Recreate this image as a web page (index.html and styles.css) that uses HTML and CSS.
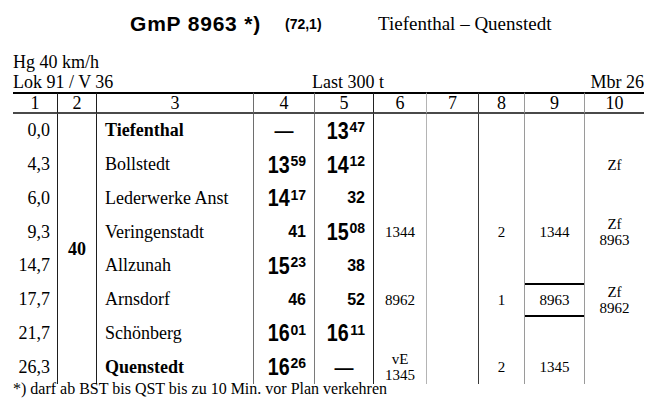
FILE: index.html
```html
<!DOCTYPE html>
<html lang="de">
<head>
<meta charset="utf-8">
<title>GmP 8963</title>
<link rel="stylesheet" href="styles.css">
</head>
<body>
<div class="page">
  <div class="title">
    <span class="train">GmP 8963 *)</span>
    <span class="code">(72,1)</span>
    <span class="route">Tiefenthal – Quenstedt</span>
  </div>
  <div class="meta">Hg 40 km/h</div>
  <div class="meta meta-row"><span>Lok 91 / V 36</span><span>Last 300 t</span><span class="mbr">Mbr 26</span></div>

  <div class="fpl">
    <div class="th c1">1</div><div class="th c2">2</div><div class="th c3">3</div><div class="th c4">4</div><div class="th c5">5</div><div class="th c6">6</div><div class="th c7">7</div><div class="th c8">8</div><div class="th c9">9</div><div class="th c10">10</div>

    <div class="td c1 km">0,0</div>
    <div class="td c2 vmax">40</div>
    <div class="td c3 stn bold">Tiefenthal</div>
    <div class="td c4 tm ctr"><span class="dash">—</span></div>
    <div class="td c5 tm"><span class="h">13</span><span class="m">47</span></div>
    <div class="td c6"></div><div class="td c7"></div><div class="td c8"></div><div class="td c9"></div><div class="td c10"></div>

    <div class="td c1 km">4,3</div>
    <div class="td c3 stn">Bollstedt</div>
    <div class="td c4 tm"><span class="h">13</span><span class="m">59</span></div>
    <div class="td c5 tm"><span class="h">14</span><span class="m">12</span></div>
    <div class="td c6"></div><div class="td c7"></div><div class="td c8"></div><div class="td c9"></div>
    <div class="td c10 sm">Zf</div>

    <div class="td c1 km">6,0</div>
    <div class="td c3 stn">Lederwerke Anst</div>
    <div class="td c4 tm"><span class="h">14</span><span class="m">17</span></div>
    <div class="td c5 tm"><span class="mo">32</span></div>
    <div class="td c6"></div><div class="td c7"></div><div class="td c8"></div><div class="td c9"></div><div class="td c10"></div>

    <div class="td c1 km">9,3</div>
    <div class="td c3 stn">Veringenstadt</div>
    <div class="td c4 tm"><span class="mo">41</span></div>
    <div class="td c5 tm"><span class="h">15</span><span class="m">08</span></div>
    <div class="td c6 sm">1344</div><div class="td c7"></div><div class="td c8 sm">2</div><div class="td c9 sm">1344</div>
    <div class="td c10 sm">Zf<br>8963</div>

    <div class="td c1 km">14,7</div>
    <div class="td c3 stn">Allzunah</div>
    <div class="td c4 tm"><span class="h">15</span><span class="m">23</span></div>
    <div class="td c5 tm"><span class="mo">38</span></div>
    <div class="td c6"></div><div class="td c7"></div><div class="td c8"></div><div class="td c9"></div><div class="td c10"></div>

    <div class="td c1 km">17,7</div>
    <div class="td c3 stn">Arnsdorf</div>
    <div class="td c4 tm"><span class="mo">46</span></div>
    <div class="td c5 tm"><span class="mo">52</span></div>
    <div class="td c6 sm">8962</div><div class="td c7"></div><div class="td c8 sm">1</div><div class="td c9 sm boxed">8963</div>
    <div class="td c10 sm">Zf<br>8962</div>

    <div class="td c1 km">21,7</div>
    <div class="td c3 stn">Schönberg</div>
    <div class="td c4 tm"><span class="h">16</span><span class="m">01</span></div>
    <div class="td c5 tm"><span class="h">16</span><span class="m">11</span></div>
    <div class="td c6"></div><div class="td c7"></div><div class="td c8"></div><div class="td c9"></div><div class="td c10"></div>

    <div class="td c1 km">26,3</div>
    <div class="td c3 stn bold">Quenstedt</div>
    <div class="td c4 tm"><span class="h">16</span><span class="m">26</span></div>
    <div class="td c5 tm ctr"><span class="dash">—</span></div>
    <div class="td c6 sm">vE<br>1345</div><div class="td c7"></div><div class="td c8 sm">2</div><div class="td c9 sm">1345</div><div class="td c10"></div>
  </div>

  <div class="foot">*) darf ab BST bis QST bis zu 10 Min. vor Plan verkehren</div>
</div>
</body>
</html>
```

FILE: styles.css
```css
html, body {
  margin: 0;
  padding: 0;
  background: #fff;
  color: #000;
}

body {
  font-family: "Liberation Serif", "Times New Roman", serif;
}

.page {
  width: 656px;
  height: 414px;
  box-sizing: border-box;
  padding: 0 12px 0 13px;
  overflow: hidden;
}

/* Title line */
.title {
  height: 44px;
  display: grid;
  grid-template-columns: 155px 93px auto;
  align-items: center;
  padding-left: 117px;
  padding-top: 3px;
  box-sizing: border-box;
}

.train {
  font-family: "Liberation Sans", Arial, sans-serif;
  font-weight: bold;
  font-size: 21px;
  letter-spacing: 0.8px;
}

.code {
  font-family: "Liberation Sans", Arial, sans-serif;
  font-weight: bold;
  font-size: 14px;
}

.route {
  font-size: 19px;
}

/* Meta lines */
.meta {
  font-size: 18px;
  line-height: 20px;
}

.title + .meta {
  margin-top: 8px;
}

.meta-row {
  display: grid;
  grid-template-columns: 299px 1fr auto;
}

/* Timetable grid */
.fpl {
  display: grid;
  grid-template-columns: 45px 39px 157px 61px 59px 53px 52px 46px 60px 59px;
  grid-template-rows: 22px repeat(8, 33.75px);
}

.th,
.td {
  box-sizing: border-box;
  border-right: 1px solid #222;
  display: flex;
  align-items: center;
  justify-content: center;
  min-width: 0;
}

.th {
  border-top: 2px solid #000;
  border-bottom: 2px solid #4a4a4a;
  font-size: 18px;
  line-height: 18px;
}

.c1, .c2 { border-right-color: #1e1e1e; }
.c3 { border-right-color: #6e6e6e; }
.c4 { border-right-color: #7a7a7a; }
.c5 { border-right-color: #222; }
.c6 { border-right-color: #b4b4b4; }
.c7 { border-right-color: #3a3a3a; }
.c8 { border-right-color: #9a9a9a; }
.c9 { border-right-color: #9a9a9a; }
.c10 { border-right: none; }

.km {
  justify-content: flex-end;
  padding-right: 7px;
  font-size: 18px;
}

.vmax {
  grid-row: span 8;
  font-weight: bold;
  font-size: 18px;
}

.stn {
  justify-content: flex-start;
  padding-left: 8px;
  font-size: 18px;
  white-space: nowrap;
}

.bold {
  font-weight: bold;
}

.tm {
  justify-content: flex-end;
  padding-right: 8px;
  font-family: "Liberation Sans", Arial, sans-serif;
  font-weight: bold;
}

.tm.ctr {
  justify-content: center;
  padding-right: 0;
}

/* hour digits: condensed look */
.h {
  display: inline-block;
  font-size: 24px;
  line-height: 1;
  transform: scaleX(0.82);
  transform-origin: 100% 50%;
  margin-left: -5px;
}

.m {
  font-size: 14px;
  line-height: 1;
  align-self: center;
  margin-bottom: 7.4px;
  margin-left: 1px;
}

.mo {
  font-size: 16px;
  line-height: 1;
}

.dash {
  font-size: 19px;
  line-height: 1;
}

.sm {
  font-size: 15px;
  line-height: 16px;
  text-align: center;
}

.boxed {
  box-shadow: inset 0 2px 0 #000, inset 0 -2px 0 #000;
}

.foot {
  font-size: 16px;
  line-height: 16px;
  margin-top: -3px;
}
```
